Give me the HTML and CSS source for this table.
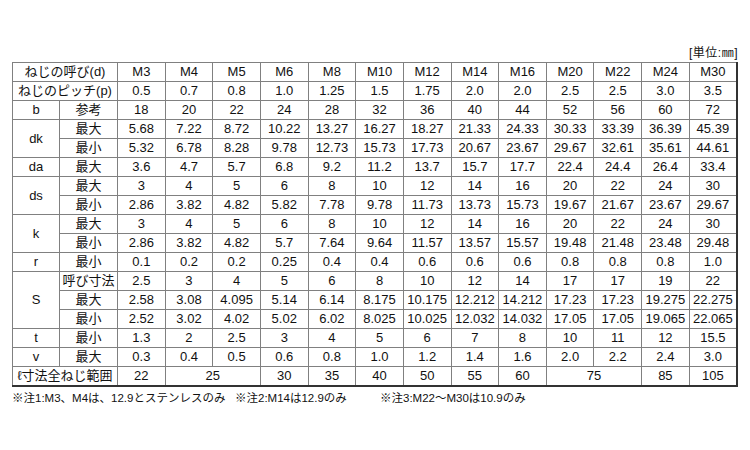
FILE: index.html
```html
<!DOCTYPE html>
<html lang="ja">
<head>
<meta charset="utf-8">
<link rel="stylesheet" href="styles.css">
</head>
<body>
<div class="page">
  <div class="unit">[単位:㎜]</div>
  <table class="spec">
    <colgroup>
      <col class="c-a"><col class="c-b">
      <col><col><col><col><col><col><col><col><col><col><col><col><col>
    </colgroup>
    <tr><td colspan="2">ねじの呼び(d)</td><td>M3</td><td>M4</td><td>M5</td><td>M6</td><td>M8</td><td>M10</td><td>M12</td><td>M14</td><td>M16</td><td>M20</td><td>M22</td><td>M24</td><td>M30</td></tr>
    <tr><td colspan="2">ねじのピッチ(p)</td><td>0.5</td><td>0.7</td><td>0.8</td><td>1.0</td><td>1.25</td><td>1.5</td><td>1.75</td><td>2.0</td><td>2.0</td><td>2.5</td><td>2.5</td><td>3.0</td><td>3.5</td></tr>
    <tr><td>b</td><td>参考</td><td>18</td><td>20</td><td>22</td><td>24</td><td>28</td><td>32</td><td>36</td><td>40</td><td>44</td><td>52</td><td>56</td><td>60</td><td>72</td></tr>
    <tr><td rowspan="2">dk</td><td>最大</td><td>5.68</td><td>7.22</td><td>8.72</td><td>10.22</td><td>13.27</td><td>16.27</td><td>18.27</td><td>21.33</td><td>24.33</td><td>30.33</td><td>33.39</td><td>36.39</td><td>45.39</td></tr>
    <tr><td>最小</td><td>5.32</td><td>6.78</td><td>8.28</td><td>9.78</td><td>12.73</td><td>15.73</td><td>17.73</td><td>20.67</td><td>23.67</td><td>29.67</td><td>32.61</td><td>35.61</td><td>44.61</td></tr>
    <tr><td>da</td><td>最大</td><td>3.6</td><td>4.7</td><td>5.7</td><td>6.8</td><td>9.2</td><td>11.2</td><td>13.7</td><td>15.7</td><td>17.7</td><td>22.4</td><td>24.4</td><td>26.4</td><td>33.4</td></tr>
    <tr><td rowspan="2">ds</td><td>最大</td><td>3</td><td>4</td><td>5</td><td>6</td><td>8</td><td>10</td><td>12</td><td>14</td><td>16</td><td>20</td><td>22</td><td>24</td><td>30</td></tr>
    <tr><td>最小</td><td>2.86</td><td>3.82</td><td>4.82</td><td>5.82</td><td>7.78</td><td>9.78</td><td>11.73</td><td>13.73</td><td>15.73</td><td>19.67</td><td>21.67</td><td>23.67</td><td>29.67</td></tr>
    <tr><td rowspan="2">k</td><td>最大</td><td>3</td><td>4</td><td>5</td><td>6</td><td>8</td><td>10</td><td>12</td><td>14</td><td>16</td><td>20</td><td>22</td><td>24</td><td>30</td></tr>
    <tr><td>最小</td><td>2.86</td><td>3.82</td><td>4.82</td><td>5.7</td><td>7.64</td><td>9.64</td><td>11.57</td><td>13.57</td><td>15.57</td><td>19.48</td><td>21.48</td><td>23.48</td><td>29.48</td></tr>
    <tr><td>r</td><td>最小</td><td>0.1</td><td>0.2</td><td>0.2</td><td>0.25</td><td>0.4</td><td>0.4</td><td>0.6</td><td>0.6</td><td>0.6</td><td>0.8</td><td>0.8</td><td>0.8</td><td>1.0</td></tr>
    <tr><td rowspan="3">S</td><td>呼び寸法</td><td>2.5</td><td>3</td><td>4</td><td>5</td><td>6</td><td>8</td><td>10</td><td>12</td><td>14</td><td>17</td><td>17</td><td>19</td><td>22</td></tr>
    <tr><td>最大</td><td>2.58</td><td>3.08</td><td>4.095</td><td>5.14</td><td>6.14</td><td>8.175</td><td>10.175</td><td>12.212</td><td>14.212</td><td>17.23</td><td>17.23</td><td>19.275</td><td>22.275</td></tr>
    <tr><td>最小</td><td>2.52</td><td>3.02</td><td>4.02</td><td>5.02</td><td>6.02</td><td>8.025</td><td>10.025</td><td>12.032</td><td>14.032</td><td>17.05</td><td>17.05</td><td>19.065</td><td>22.065</td></tr>
    <tr><td>t</td><td>最小</td><td>1.3</td><td>2</td><td>2.5</td><td>3</td><td>4</td><td>5</td><td>6</td><td>7</td><td>8</td><td>10</td><td>11</td><td>12</td><td>15.5</td></tr>
    <tr><td>v</td><td>最大</td><td>0.3</td><td>0.4</td><td>0.5</td><td>0.6</td><td>0.8</td><td>1.0</td><td>1.2</td><td>1.4</td><td>1.6</td><td>2.0</td><td>2.2</td><td>2.4</td><td>3.0</td></tr>
    <tr><td colspan="2">ℓ寸法全ねじ範囲</td><td>22</td><td colspan="2">25</td><td>30</td><td>35</td><td>40</td><td>50</td><td>55</td><td>60</td><td colspan="2">75</td><td>85</td><td>105</td></tr>
  </table>
  <p class="notes"><span class="n1">※注1:M3、M4は、12.9とステンレスのみ</span><span class="n2">※注2:M14は12.9のみ</span><span>※注3:M22～M30は10.9のみ</span></p>
</div>
</body>
</html>
```

FILE: styles.css
```css
html, body {
  margin: 0;
  padding: 0;
  background: #ffffff;
}

.page {
  padding: 44px 0 0 12px;
  width: 726px;
  font-family: "Liberation Sans", "Noto Sans CJK JP", sans-serif;
  color: #111111;
}

.unit {
  display: flex;
  justify-content: flex-end;
  font-size: 12px;
  line-height: 18px;
  height: 18px;
  letter-spacing: 0.5px;
}

.spec {
  width: 726px;
  table-layout: fixed;
  border-collapse: collapse;
  border-top: 1px solid #333333;
  border-left: 1px solid #333333;
  border-right: 2px solid #333333;
  border-bottom: 2px solid #333333;
  font-size: 13px;
}

.c-a { width: 47px; }
.c-b { width: 58px; }

.spec td {
  border: 1px solid #808080;
  height: 18px;
  padding: 0;
  line-height: 18px;
  text-align: center;
  white-space: nowrap;
  overflow: hidden;
}

.notes {
  margin: 3px 0 0 0;
  font-size: 11.5px;
  line-height: 16px;
  display: flex;
}

.n1 { width: 223px; }
.n2 { width: 145px; }
```
